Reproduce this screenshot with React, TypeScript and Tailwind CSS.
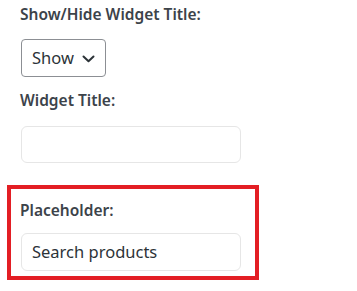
import React from "react";

const font = { fontFamily: '"Noto Sans", "Open Sans", sans-serif' };

function Label({ children, className = "" }: { children: React.ReactNode; className?: string }) {
  return (
    <div className={`block text-[15.5px] font-semibold leading-[22px] text-[#3c434a] ${className}`}>{children}</div>
  );
}

export default function App() {
  return (
    <div className="w-[357px] h-[291px] bg-white pl-[20px] pt-[3px]" style={font}>
      <Label>Show/Hide Widget Title:</Label>
      <div className="mt-[14px] ml-[1px] w-[85px] h-[38px] border border-[#8c8f94] rounded-[4px] flex items-center pl-[10px] text-[16.5px] text-[#2c3338]">
        <span>Show</span>
        <svg className="ml-[8px] mt-[1px]" width="13" height="8" viewBox="0 0 13 8" fill="none">
          <path d="M1.5 1.5 L6.5 6.2 L11.5 1.5" stroke="#2c3338" strokeWidth="2" strokeLinecap="round" strokeLinejoin="round" />
        </svg>
      </div>
      <Label className="mt-[12px]">Widget Title:</Label>
      <div className="mt-[15px] ml-[1px] w-[220px] h-[37px] border border-[#e6e6e6] rounded-[6px]" />
      <div className="mt-[22px] -ml-[13px] w-[252px] h-[95px] border-4 border-[#e31e24] pl-[9px] pt-[10px]">
        <Label>Placeholder:</Label>
        <div className="mt-[12px] ml-[1px] w-[220px] h-[38px] border border-[#e6e6e6] rounded-[6px] flex items-center pl-[10px] text-[16.5px] text-[#2c3338]">
          Search products
        </div>
      </div>
    </div>
  );
}
